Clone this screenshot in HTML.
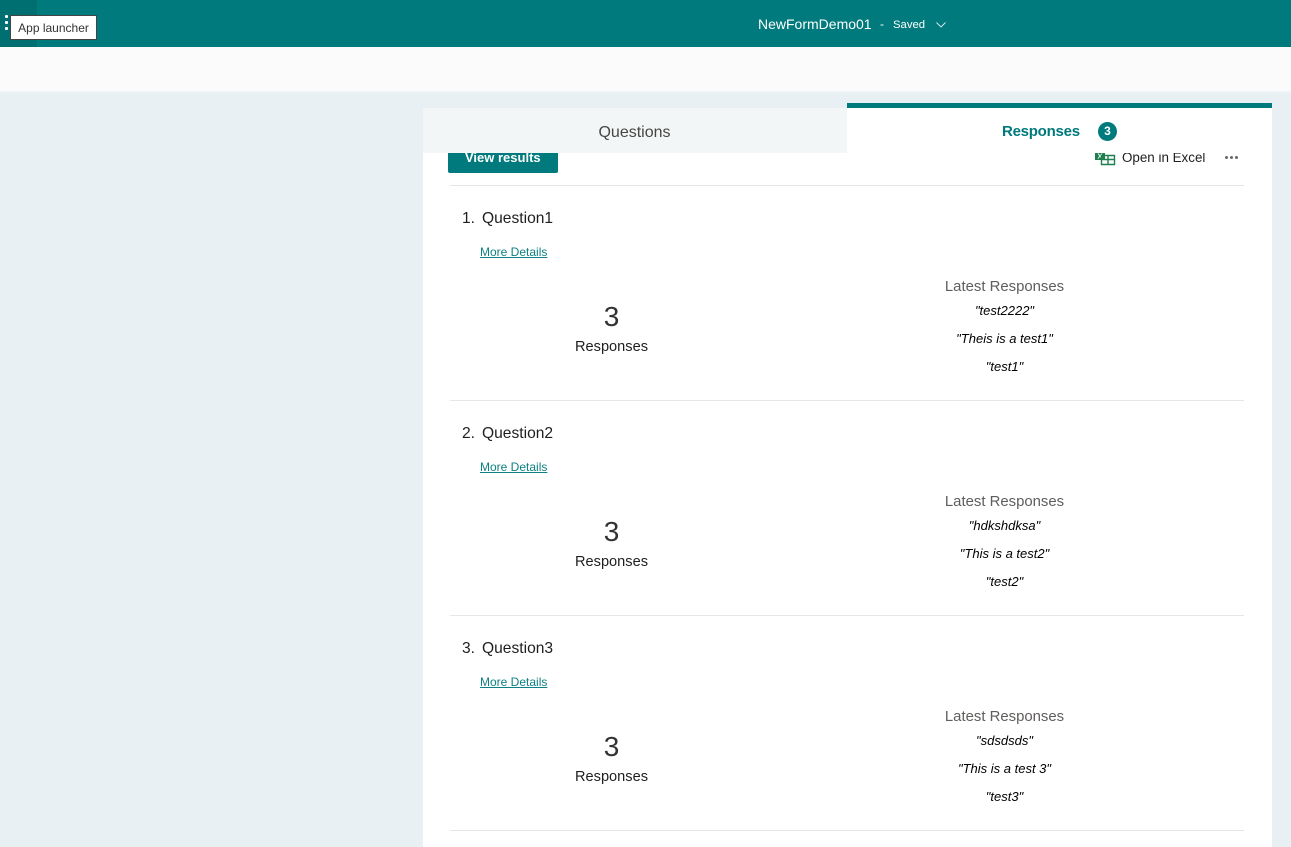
<!DOCTYPE html>
<html><head><meta charset="utf-8"><style>
html,body{margin:0;padding:0;width:1291px;height:847px;overflow:hidden;background:#e9f0f3;font-family:"Liberation Sans",sans-serif;color:#201f1e}
.a{position:absolute;white-space:nowrap}
.c{text-align:center;transform:translateX(-50%)}
.h{position:absolute;left:450px;width:794px;height:1px;background:#e6e6e6}
.i{font-style:italic;font-size:13px;color:#000}
.l{font-size:12px;color:#0f8083;text-decoration:underline}
.q{font-size:15.6px;line-height:20px}
.n{font-size:28px;line-height:34px;color:#333}
.r{font-size:14.6px;line-height:20px}
.t{font-size:14.900px;line-height:20px;color:#605e5c}
</style></head><body>
<div class="a" style="left:0;top:0;width:1291px;height:47px;background:#007a7c"></div>
<div class="a" style="left:0;top:0;width:37px;height:47px;background:#006f71"></div>
<div class="a" style="left:5px;top:15px;width:3px;height:3px;background:#fff;border-radius:1px"></div>
<div class="a" style="left:5px;top:21px;width:3px;height:3px;background:#fff;border-radius:1px"></div>
<div class="a" style="left:5px;top:27px;width:3px;height:3px;background:#fff;border-radius:1px"></div>
<div class="a" style="left:10px;top:15px;width:85px;height:23px;background:#fff;border:1px solid #444;font-size:12px;line-height:24px;text-align:center;color:#333">App launcher</div>
<div class="a" style="left:758px;top:15px;font-size:14px;line-height:18px;color:#fff">NewFormDemo01</div>
<div class="a" style="left:880px;top:16px;font-size:12px;line-height:17px;color:#fff">-</div>
<div class="a" style="left:893px;top:16px;font-size:11.300px;line-height:18px;color:#fff">Saved</div>
<svg class="a" style="left:935px;top:20px" width="12" height="10"><path d="M1.5 2.500L6 7L10.500 2.500" fill="none" stroke="#d8ecec" stroke-width=".9"/></svg>
<div class="a" style="left:0;top:47px;width:1291px;height:44px;background:#fbfbfb"></div>
<div class="a" style="left:0;top:91px;width:1291px;height:2px;background:#eef4f6"></div>
<div class="a" style="left:423px;top:108px;width:849px;height:739px;background:#fff"></div>

<div class="a" style="left:448px;top:145px;width:110px;height:28px;background:#007a7c;border-radius:2px"></div>
<div class="a" style="left:465px;top:149px;font-size:13px;line-height:17px;font-weight:bold;color:#fff">View results</div>
<svg class="a" style="left:1095px;top:150px" width="21" height="16"><rect x="0" y="2" width="10" height="8" fill="#1e7f4f"/><path d="M3 3.500L7 8.500M7 3.500L3 8.500" stroke="#fff" stroke-width="1"/><path d="M6.500 5.500h13v9h-13zM6.500 9.500h13M13 5.500v9" fill="none" stroke="#1e7f4f" stroke-width="1.400"/></svg>
<div class="a" style="left:1122px;top:149px;font-size:13.400px;line-height:17px;color:#201f1e">Open in Excel</div>
<div class="a" style="left:847px;top:108px;width:425px;height:45px;background:#fff"></div>
<div class="a" style="left:423px;top:108px;width:424px;height:45px;background:#f2f6f7"></div>
<div class="a" style="left:847px;top:103px;width:425px;height:5px;background:#007a7c"></div>
<div class="a c" style="left:634.500px;top:123px;font-size:16px;line-height:20px;color:#484644">Questions</div>
<div class="a" style="left:1002px;top:122px;font-size:15px;line-height:20px;font-weight:bold;color:#007a7c;letter-spacing:-.25px">Responses</div>
<div class="a" style="left:1098px;top:122px;width:19px;height:19px;border-radius:50%;background:#007a7c;color:#fff;font-size:12px;font-weight:bold;line-height:19px;text-align:center">3</div>
<div class="a" style="left:1225px;top:156px;width:3px;height:3px;border-radius:50%;background:#6b6967"></div>
<div class="a" style="left:1230px;top:156px;width:3px;height:3px;border-radius:50%;background:#6b6967"></div>
<div class="a" style="left:1235px;top:156px;width:3px;height:3px;border-radius:50%;background:#6b6967"></div>
<div class="h" style="top:185px"></div>

<div class="a q" style="left:462px;top:209px">1.</div>
<div class="a q" style="left:482px;top:209px">Question1</div>
<div class="a l" style="left:480px;top:244px;line-height:16px">More Details</div>
<div class="a c n" style="left:611.500px;top:300px">3</div>
<div class="a c r" style="left:611.500px;top:337px">Responses</div>
<div class="a c t" style="left:1004.500px;top:277px">Latest Responses</div>
<div class="a c i" style="left:1004.500px;top:302px;line-height:18px">"test2222"</div>
<div class="a c i" style="left:1004.500px;top:330px;line-height:18px">"Theis is a test1"</div>
<div class="a c i" style="left:1004.500px;top:358px;line-height:18px">"test1"</div>
<div class="h" style="top:400px"></div>

<div class="a q" style="left:462px;top:424px">2.</div>
<div class="a q" style="left:482px;top:424px">Question2</div>
<div class="a l" style="left:480px;top:459px;line-height:16px">More Details</div>
<div class="a c n" style="left:611.500px;top:515px">3</div>
<div class="a c r" style="left:611.500px;top:552px">Responses</div>
<div class="a c t" style="left:1004.500px;top:492px">Latest Responses</div>
<div class="a c i" style="left:1004.500px;top:517px;line-height:18px">"hdkshdksa"</div>
<div class="a c i" style="left:1004.500px;top:545px;line-height:18px">"This is a test2"</div>
<div class="a c i" style="left:1004.500px;top:573px;line-height:18px">"test2"</div>
<div class="h" style="top:615px"></div>

<div class="a q" style="left:462px;top:639px">3.</div>
<div class="a q" style="left:482px;top:639px">Question3</div>
<div class="a l" style="left:480px;top:674px;line-height:16px">More Details</div>
<div class="a c n" style="left:611.500px;top:730px">3</div>
<div class="a c r" style="left:611.500px;top:767px">Responses</div>
<div class="a c t" style="left:1004.500px;top:707px">Latest Responses</div>
<div class="a c i" style="left:1004.500px;top:732px;line-height:18px">"sdsdsds"</div>
<div class="a c i" style="left:1004.500px;top:760px;line-height:18px">"This is a test 3"</div>
<div class="a c i" style="left:1004.500px;top:788px;line-height:18px">"test3"</div>
<div class="h" style="top:830px"></div>
</body></html>
